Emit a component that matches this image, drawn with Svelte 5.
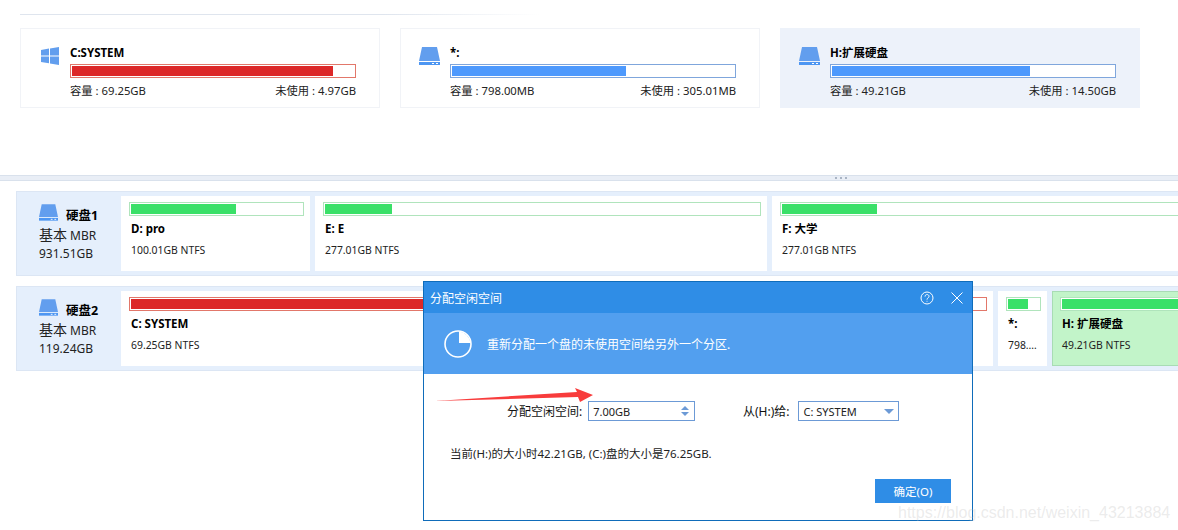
<script>
	const cards = [
		{ icon: 'win', name: 'C:SYSTEM', size: '69.25GB', free: '4.97GB', pct: 92.6, kind: 'red' },
		{ icon: 'disk', name: '*:', size: '798.00MB', free: '305.01MB', pct: 61.7, kind: 'blue' },
		{ icon: 'disk', name: 'H:扩展硬盘', size: '49.21GB', free: '14.50GB', pct: 70.2, kind: 'blue', active: true }
	];

	const disks = [
		{
			name: '硬盘1', size: '931.51GB',
			parts: [
				{ name: 'D: pro', info: '100.01GB NTFS', w: 189, fill: 105, kind: 'green' },
				{ name: 'E: E', info: '277.01GB NTFS', w: 452, fill: 67, kind: 'green' },
				{ name: 'F: 大学', info: '277.01GB NTFS', w: 452, fill: 95, kind: 'green' }
			]
		},
		{
			name: '硬盘2', size: '119.24GB',
			parts: [
				{ name: 'C: SYSTEM', info: '69.25GB NTFS', w: 872, fill: 790, kind: 'red' },
				{ name: '*:', info: '798.…', w: 49, fill: 20, kind: 'green' },
				{ name: 'H: 扩展硬盘', info: '49.21GB NTFS', w: 200, fill: 160, kind: 'green', active: true }
			]
		}
	];
</script>

{#snippet diskIcon(w, h)}
	<svg width={w} height={h} viewBox="0 0 21 18">
		<path d="M3 0H18L21 14H0Z" fill="#629eee" />
		<rect y="15" width="21" height="3" fill="#4d96f2" />
		<rect x="13" y="16" width="2" height="1" fill="#fff" />
		<rect x="17" y="16" width="2" height="1" fill="#fff" />
	</svg>
{/snippet}

<div class="page">
	<div class="top">
		<div class="heading">磁盘</div>
		<div class="rule"></div>
		<div class="cards">
			{#each cards as card}
				<div class="card" class:active={card.active}>
					<div class="card-icon" class:wide={card.icon === 'disk'}>
						{#if card.icon === 'win'}
							<svg width="18" height="18" viewBox="0 0 18 18">
								<path d="M0 3L8 1.6V8.5H0ZM9 1.4L18 0V8.5H9ZM0 9.5H8V16.2L0 15ZM9 9.5H18V18L9 16.4Z" fill="#629eee" />
							</svg>
						{:else}
							{@render diskIcon(21, 18)}
						{/if}
					</div>
					<div class="card-body">
						<div class="card-name">{card.name}</div>
						<div class="bar {card.kind}"><div class="fill" style="width: {card.pct}%"></div></div>
						<div class="card-stats">
							<span>容量 : {card.size}</span>
							<span>未使用 : {card.free}</span>
						</div>
					</div>
				</div>
			{/each}
		</div>
	</div>

	<div class="splitter">
		<i></i><i></i><i></i>
	</div>

	<div class="disks">
		{#each disks as disk}
			<div class="disk">
				<div class="disk-info">
					<div class="disk-head">
						{@render diskIcon(19, 17)}
						<b>{disk.name}</b>
					</div>
					<div class="disk-type"><span>基本</span> MBR</div>
					<div>{disk.size}</div>
				</div>
				{#each disk.parts as part}
					<div class="part" class:active={part.active} style="width: {part.w}px">
						<div class="bar {part.kind}"><div class="fill" style="width: {part.fill}px"></div></div>
						<div class="part-name">{part.name}</div>
						<div class="part-info">{part.info}</div>
					</div>
				{/each}
			</div>
		{/each}
	</div>

	<div class="dialog">
		<div class="dialog-title">
			<span>分配空闲空间</span>
			<div class="dialog-tools">
				<svg width="14" height="14" viewBox="0 0 14 14" fill="none" stroke="#fff">
					<circle cx="7" cy="7" r="6" />
					<path d="M5 5.6C5 2.9 9 2.9 9 5.4C9 6.9 7 6.9 7 8.6" />
					<rect x="6.6" y="9.8" width="0.8" height="1" fill="#fff" stroke="none" />
				</svg>
				<svg width="12" height="12" viewBox="0 0 12 12" fill="none" stroke="#fff">
					<path d="M0.5 0.5L11.5 11.5M11.5 0.5L0.5 11.5" />
				</svg>
			</div>
		</div>
		<div class="dialog-banner">
			<svg width="28" height="28" viewBox="0 0 28 28">
				<circle cx="14" cy="14" r="13" fill="none" stroke="#fff" stroke-width="1.6" />
				<path d="M15 1.5A12.6 12.6 0 0 1 26.5 13H15Z" fill="#fff" />
			</svg>
			<span>重新分配一个盘的未使用空间给另外一个分区.</span>
		</div>
		<div class="dialog-body">
			<div class="fields">
				<label class="field-free">
					<span>分配空闲空间:</span>
					<div class="spin">
						<span>7.00GB</span>
						<div class="spin-arrows"><i class="up"></i><i class="down"></i></div>
					</div>
				</label>
				<label class="field-from">
					<span>从(H:)给:</span>
					<div class="select">
						<span>C: SYSTEM</span>
						<i class="down"></i>
					</div>
				</label>
			</div>
			<p>当前(H:)的大小时42.21GB, (C:)盘的大小是76.25GB.</p>
			<div class="actions"><button>确定(O)</button></div>
		</div>
	</div>

	<svg class="arrow" width="170" height="20" viewBox="0 0 170 20">
		<path d="M0 15L142 6L140 2L158 9L145 16L143 11Z" fill="#f83c3c" />
	</svg>

	<div class="watermark">https://blog.csdn.net/weixin_43213884</div>
</div>

<style>
	:global(body) {
		background: #fff;
		overflow: hidden;
	}

	.page {
		position: relative;
		width: 1178px;
		height: 530px;
		overflow: hidden;
		font-family: "Noto Sans", "Noto Sans CJK SC", sans-serif;
		font-size: 11px;
		color: #111;
	}

	.top {
		display: flow-root;
		height: 175px;
		box-sizing: border-box;
		padding-left: 20px;
	}

	.heading {
		height: 14px;
		margin-top: -12px;
		font-size: 12px;
		line-height: 14px;
		font-weight: 700;
		color: #000;
	}

	.rule {
		height: 1px;
		margin-top: 12px;
		width: 520px;
		background: linear-gradient(to right, #dfe5ee 0, #dfe5ee 70%, #fff 100%);
	}

	.cards {
		display: flex;
		gap: 20px;
		margin-top: 13px;
	}

	.card {
		display: flex;
		width: 360px;
		height: 80px;
		box-sizing: border-box;
		border: 1px solid #f1f3f7;
		padding: 18px 24px 0 20px;
	}

	.card.active {
		background: #edf2fa;
		border-color: #edf2fa;
	}

	.card-icon {
		width: 29px;
		flex: none;
	}

	.card-icon.wide {
		margin-left: -2px;
		width: 31px;
	}

	.card-icon svg {
		display: block;
	}

	.card-body {
		width: 286px;
		flex: none;
	}

	.card-name {
		height: 17px;
		line-height: 12px;
		font-size: 11.5px;
		font-weight: 700;
		color: #000;
	}

	.card-stats {
		display: flex;
		justify-content: space-between;
		margin-top: 5px;
		font-size: 11.3px;
		line-height: 16px;
		color: #222;
	}

	.bar {
		height: 14px;
		box-sizing: border-box;
		border: 1px solid;
		padding: 1px;
		background: #fff;
	}

	.fill {
		height: 100%;
	}

	.bar.red { border-color: #e2776a; }
	.bar.red .fill { background: #dc2828; }
	.bar.blue { border-color: #7fa6dc; }
	.bar.blue .fill { background: #4d99fd; }
	.bar.green { border-color: #b0e4bc; }
	.bar.green .fill { background: #3ae068; }

	.splitter {
		display: flex;
		justify-content: center;
		align-items: center;
		gap: 3px;
		height: 6px;
		box-sizing: border-box;
		padding-left: 504px;
		border-top: 1px solid #d9e1ec;
		border-bottom: 1px solid #d9e1ec;
		background: #e9eef6;
	}

	.splitter i {
		width: 2px;
		height: 2px;
		background: #a9b4c4;
	}

	.disks {
		display: flex;
		flex-direction: column;
		gap: 10px;
		margin: 10px 0 0 16px;
		width: 1300px;
	}

	.disk {
		display: flex;
		gap: 5px;
		height: 85px;
		box-sizing: border-box;
		padding: 4px 0;
		border: 1px solid #dce6f4;
		background: #e5effc;
	}

	.disk-info {
		width: 99px;
		flex: none;
		padding: 8px 0 0 22px;
		box-sizing: border-box;
		font-size: 12px;
		line-height: 18px;
		color: #222;
		white-space: nowrap;
	}

	.disk-head {
		display: flex;
		align-items: flex-end;
		gap: 8px;
		height: 19px;
		margin-bottom: 3px;
		color: #000;
	}

	.disk-head svg {
		flex: none;
		margin-bottom: 2px;
	}

	.disk-head b {
		font-size: 12.5px;
		line-height: 15px;
	}

	.disk-type span {
		font-size: 14px;
	}

	.part {
		flex: none;
		height: 75px;
		box-sizing: border-box;
		padding: 6px 6px 0 8px;
		background: #fff;
		overflow: hidden;
	}

	.part.active {
		background: #c2f4c9;
		border: 1px solid #a8dcb4;
		padding: 5px 5px 0 7px;
	}

	.part-name {
		margin-top: 5px;
		height: 15px;
		line-height: 15px;
		padding-left: 2px;
		font-size: 11.5px;
		font-weight: 700;
		color: #000;
		white-space: nowrap;
	}

	.part-info {
		margin-top: 7px;
		line-height: 15px;
		font-size: 10.4px;
		padding-left: 2px;
		color: #222;
		white-space: nowrap;
	}

	.dialog {
		position: absolute;
		left: 423px;
		top: 281px;
		width: 550px;
		height: 240px;
		box-sizing: border-box;
		border: 1px solid #0f6cba;
		background: #fff;
	}

	.dialog-title {
		display: flex;
		justify-content: space-between;
		align-items: center;
		height: 31px;
		padding: 0 9px 0 6px;
		background: #2f8de6;
		color: #fff;
		font-size: 12px;
	}

	.dialog-tools {
		display: flex;
		align-items: center;
		gap: 17px;
	}

	.dialog-banner {
		display: flex;
		align-items: center;
		gap: 15px;
		height: 61px;
		padding-left: 20px;
		background: #529fef;
		color: #fff;
		font-size: 12px;
	}

	.dialog-body {
		padding: 27px 21px 0 26px;
	}

	.fields {
		position: relative;
		display: flex;
		height: 20px;
		padding-left: 57px;
		font-size: 12px;
	}

	label {
		display: flex;
		align-items: center;
		white-space: nowrap;
	}

	.field-free {
		width: 236px;
		gap: 6px;
	}

	.field-from {
		gap: 8px;
	}

	.spin,
	.select {
		display: flex;
		justify-content: space-between;
		align-items: center;
		box-sizing: border-box;
		flex: none;
		border: 1px solid #6c9ad6;
		padding: 0 5px 0 4px;
		height: 20px;
		font-size: 11px;
		color: #222;
	}

	.spin {
		width: 107px;
	}

	.select {
		width: 101px;
		padding: 0 4px 0 5px;
	}

	.select .down {
		border-left: 5px solid transparent;
		border-right: 5px solid transparent;
		border-top: 5px solid #6c9ad6;
	}

	.spin-arrows {
		display: flex;
		flex-direction: column;
		gap: 2px;
	}

	.spin-arrows i {
		border-left: 4px solid transparent;
		border-right: 4px solid transparent;
	}

	.spin-arrows .up { border-bottom: 4px solid #6c9ad6; }
	.spin-arrows .down { border-top: 4px solid #6c9ad6; }

	p {
		margin: 25px 0 0;
		font-size: 11.5px;
		line-height: 16px;
		color: #222;
	}

	.actions {
		display: flex;
		justify-content: flex-end;
		margin-top: 17px;
	}

	button {
		width: 76px;
		height: 24px;
		padding: 0;
		border: none;
		background: #2f8de6;
		color: #fff;
		font: inherit;
		font-size: 11.5px;
	}

	.arrow {
		position: absolute;
		left: 435px;
		top: 386px;
	}

	.watermark {
		position: absolute;
		left: 898px;
		top: 503px;
		font-family: "Liberation Sans", sans-serif;
		font-size: 16px;
		line-height: 20px;
		color: rgba(190, 190, 190, 0.3);
		white-space: nowrap;
	}
</style>
